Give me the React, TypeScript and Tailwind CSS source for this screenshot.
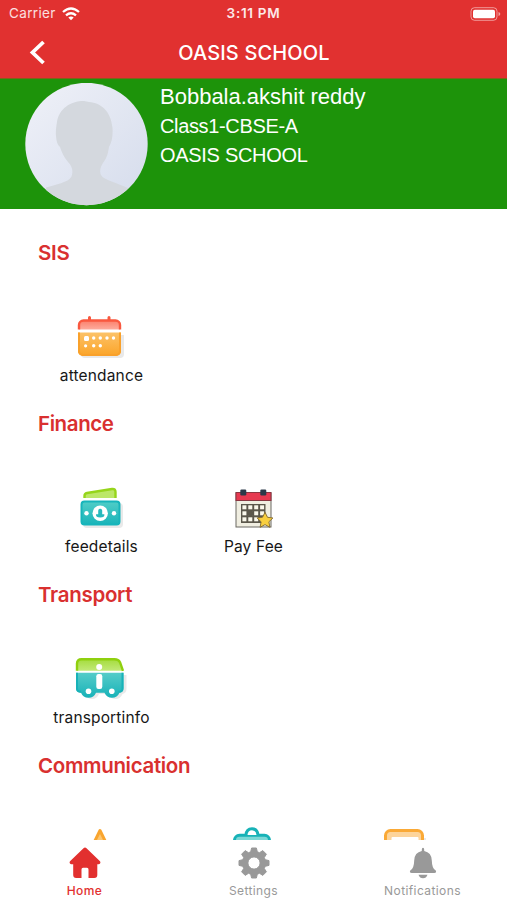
import React from "react";

const AttendanceIcon = () => (
  <svg width="52" height="48" viewBox="0 0 52 48">
    <defs>
      <linearGradient id="attTop" x1="0" y1="0" x2="0" y2="1">
        <stop offset="0" stopColor="#fb7f6b" />
        <stop offset="1" stopColor="#fdac9d" />
      </linearGradient>
      <linearGradient id="attBody" x1="0" y1="0" x2="0" y2="1">
        <stop offset="0" stopColor="#fcc268" />
        <stop offset="1" stopColor="#fba428" />
      </linearGradient>
    </defs>
    <path d="M6 22h43v19a4 4 0 0 1-4 4H10a4 4 0 0 1-4-4z" fill="#e9e9e9" />
    <path d="M14.5 4.500v5M34 4.500v5" stroke="#f9583f" strokeWidth="3" strokeLinecap="round" />
    <path d="M4 16.500v-4.500a4.500 4.500 0 0 1 4.500-4.500h32a4.500 4.500 0 0 1 4.500 4.500v4.500z" fill="url(#attTop)" />
    <path d="M4 16.500v-4.500a4.500 4.500 0 0 1 4.500-4.500h32a4.500 4.500 0 0 1 4.500 4.500v4.500" fill="none" stroke="#f9583f" strokeWidth="2.400" />
    <path d="M3 19.500h43v18.500a5 5 0 0 1-5 5H8a5 5 0 0 1-5-5z" fill="url(#attBody)" />
    <path d="M4 19.500V38a4 4 0 0 0 4 4h33a4 4 0 0 0 4-4V19.500" fill="none" stroke="#f9a12b" strokeWidth="2" />
    <g fill="#fff">
      <rect x="9" y="23" width="5" height="5" rx="1.500" />
      <circle cx="18.700" cy="25" r="1.700" />
      <circle cx="25.300" cy="25" r="1.700" />
      <circle cx="32" cy="25" r="1.700" />
      <circle cx="38.500" cy="25" r="1.700" />
      <circle cx="10.600" cy="32.800" r="1.600" />
      <circle cx="18.700" cy="32.800" r="1.700" />
      <circle cx="25.300" cy="32.800" r="1.700" />
    </g>
  </svg>
);

const FeeIcon = () => (
  <svg width="52" height="48" viewBox="0 0 52 48">
    <defs>
      <linearGradient id="feeBody" x1="0" y1="0" x2="0" y2="1">
        <stop offset="0" stopColor="#50cdc7" />
        <stop offset="1" stopColor="#19b4b9" />
      </linearGradient>
    </defs>
    <rect x="8" y="19" width="40" height="25" rx="4" fill="#e9e9e9" />
    <path d="M9.500 14v-2q0-2.500 2.500-3l25-4q3.500-.5 3.500 3v6z" fill="#bce768" />
    <path d="M9.500 14v-2q0-2.500 2.500-3l25-4q3.500-.5 3.500 3v6" fill="none" stroke="#96d51b" strokeWidth="2.400" />
    <rect x="6.500" y="17.500" width="38" height="23" rx="3" fill="url(#feeBody)" stroke="#17b5bb" strokeWidth="2" />
    <circle cx="25.200" cy="29.300" r="7.700" fill="#fff" />
    <circle cx="11.500" cy="29.300" r="2.200" fill="#fff" />
    <circle cx="39" cy="29.300" r="2.200" fill="#fff" />
    <path d="M25.200 26.800v3.500" stroke="#27b9bd" strokeWidth="4" strokeLinecap="round" />
    <path d="M21 30.200h8.400q.4 3.300-4.200 3.300t-4.200-3.300z" fill="#27b9bd" />
  </svg>
);

const PayFeeIcon = () => (
  <svg width="52" height="48" viewBox="0 0 52 48">
    <rect x="9" y="9" width="35" height="34" fill="#f0eee1" stroke="#6b6862" strokeWidth="1" />
    <rect x="9" y="8.500" width="35" height="8" fill="#e63950" stroke="#8b3540" strokeWidth="1" />
    <rect x="13.300" y="5.500" width="6" height="6" rx="1.200" fill="#2b3949" />
    <rect x="33.300" y="5.500" width="6" height="6" rx="1.200" fill="#2b3949" />
    <rect x="14" y="20" width="24.500" height="19" fill="#5b574b" />
    <g fill="#faf8ec">
      {[21.3, 27.3, 33.3].map((y) =>
        [15.4, 21.3, 27.2, 33.1].map((x) => <rect key={`${x}-${y}`} x={x} y={y} width="4" height="4" />)
      )}
    </g>
    <circle cx="23.300" cy="29.300" r="3" fill="#5b574b" />
    <path
      d="M38 28.300l2.500 5 5.400.7-4 3.800 1 5.500-4.900-2.700-4.900 2.700 1-5.500-4-3.800 5.400-.7z"
      fill="#f9cf3f"
      stroke="#80662b"
      strokeWidth=".9"
      strokeLinejoin="round"
    />
  </svg>
);

const TransportIcon = () => (
  <svg width="52" height="48" viewBox="0 0 52 48">
    <defs>
      <linearGradient id="busTop" x1="0" y1="0" x2="0" y2="1">
        <stop offset="0" stopColor="#a4dc3d" />
        <stop offset="1" stopColor="#c2e978" />
      </linearGradient>
      <linearGradient id="busBody" x1="0" y1="0" x2="0" y2="1">
        <stop offset="0" stopColor="#55ccc9" />
        <stop offset="1" stopColor="#18b2b8" />
      </linearGradient>
    </defs>
    <path d="M5 20h46.500v14q0 4-4 5-2 5-7 5t-7-5H24q-2 5-7 5t-7-5q-5-1-5-5z" fill="#e9e9e9" />
    <path d="M2 15.800v-7.300q0-4.300 4.500-4.300h33q4 0 5.500 3l3 8.600z" fill="url(#busTop)" />
    <path d="M2 15.800v-7.300q0-4.300 4.500-4.300h33q4 0 5.500 3l3 8.600" fill="none" stroke="#8fd00e" strokeWidth="2.400" />
    <path d="M1 17.800h47.500v15q0 4.500-4 5-2.200 5-7.500 5t-7.500-5H21q-2 5-7.500 5t-7.500-5q-5-.5-5-5z" fill="url(#busBody)" />
    <path d="M2 17.800v16q0 3 4 3M47.500 17.800v16q0 3-4 3" fill="none" stroke="#18b2b8" strokeWidth="2" />
    <circle cx="13.500" cy="36.300" r="2.800" fill="#fff" />
    <circle cx="36.800" cy="36.300" r="2.800" fill="#fff" />
    <circle cx="24.200" cy="12" r="3" fill="#fff" />
    <rect x="21.300" y="19" width="6" height="15" rx="2.200" fill="#fff" />
  </svg>
);

const WarningIcon = () => (
  <svg width="52" height="48" viewBox="0 0 52 48">
    <path d="M25 4.500L40 35H10z" fill="#fcc774" stroke="#f9a52f" strokeWidth="3" strokeLinejoin="round" />
  </svg>
);

const BagIcon = () => (
  <svg width="52" height="48" viewBox="0 0 52 48">
    <rect x="7.500" y="9.300" width="35" height="34" rx="5" fill="#7cd8d6" stroke="#17b2b7" strokeWidth="3" />
    <path d="M19 9q.5-6.300 6-6.300t6 6.300" fill="#fff" stroke="#17b2b7" strokeWidth="3" />
  </svg>
);

const NoticeIcon = () => (
  <svg width="52" height="48" viewBox="0 0 52 48">
    <path d="M44 12h3v30h-3z" fill="#e9e9e9" />
    <rect x="6.500" y="4.500" width="37" height="36" rx="5" fill="#fdd49a" stroke="#faa936" strokeWidth="3" />
    <rect x="12.500" y="11" width="27" height="28" rx="1" fill="#fff" />
  </svg>
);

const sections = [
  {
    title: "SIS",
    titleClass: "tracking-[-0.3px]",
    items: [{ label: "attendance", icon: <AttendanceIcon /> }],
  },
  {
    title: "Finance",
    titleClass: "tracking-[-0.4px]",
    items: [
      { label: "feedetails", icon: <FeeIcon /> },
      { label: "Pay Fee", icon: <PayFeeIcon /> },
    ],
  },
  {
    title: "Transport",
    titleClass: "tracking-[-0.3px]",
    items: [{ label: "transportinfo", icon: <TransportIcon /> }],
  },
  {
    title: "Communication",
    titleClass: "tracking-[-0.33px]",
    items: [
      { label: "", icon: <WarningIcon /> },
      { label: "", icon: <BagIcon /> },
      { label: "", icon: <NoticeIcon /> },
    ],
  },
];

const tabs = [
  {
    label: "Home",
    className: "text-[#e2302f] font-medium",
    icon: (
      <path d="M16 .5q.8 0 1.500.7L31 14.200q.8 1 .2 2-.5 1-1.700 1H28.300V28q0 3-3 3h-5.800v-8.500q0-1.700-1.500-1.700h-4q-1.500 0-1.500 1.700V31H7.200q-3 0-3-3V17.200H2.500q-1.200 0-1.700-1-.6-1 .2-2L14.500 1.200Q15.200.5 16 .5z" />
    ),
  },
  {
    label: "Settings",
    className: "text-[#999]",
    icon: (
      <path
        fillRule="evenodd"
        stroke="currentColor"
        strokeWidth="1"
        strokeLinejoin="round"
        d="M13.600 1h4.800l.9 3.800 2.200.9 3.300-2.100 3.600 3.600-2.100 3.300.9 2.200 3.800.9v4.800l-3.800.9-.9 2.200 2.100 3.300-3.600 3.600-3.300-2.100-2.200.9-.9 3.800h-4.800l-.9-3.800-2.200-.9-3.300 2.100-3.600-3.600 2.100-3.300-.9-2.200-3.800-.9v-4.800l3.800-.9.9-2.200-2.100-3.300 3.600-3.600 3.300 2.100 2.200-.9zM16 9.900a6.100 6.100 0 1 0 0 12.200 6.100 6.100 0 0 0 0-12.200z"
      />
    ),
  },
  {
    label: "Notifications",
    className: "text-[#999]",
    icon: (
      <>
        <path d="M16 .8q1.200 0 1.200 2v1.300q7.300 1.500 7.600 9.400.2 7.500 3.400 9.500 1.300 1 .8 2.300-.4.800-1.800.8H4.800q-1.400 0-1.800-.8-.5-1.300.8-2.300 3.200-2 3.400-9.500.3-7.900 7.600-9.400V2.800q0-2 1.200-2z" />
        <path d="M11.500 27.800h9q-1.200 3.500-4.500 3.500t-4.500-3.500z" />
      </>
    ),
  },
];

const StatusBar = () => (
  <div className="grid h-[27px] grid-cols-[160px_1fr_160px] items-center text-[13.500px]">
    <div className="flex items-center gap-[6px] pl-[9px] text-white/85">
      <span className="tracking-[0.35px]">Carrier</span>
      <svg width="18" height="14" viewBox="0 0 18 14" fill="none" stroke="#fff" strokeWidth="2.300">
        <path d="M1 5q8-7 16 0" />
        <path d="M4 8.300q5-4.200 10 0" />
        <path d="M6.300 10.500q2.700-2.200 5.400 0L9 13.300z" fill="#fff" stroke="none" />
      </svg>
    </div>
    <span className="text-center font-semibold tracking-[0.7px] text-white/90">3:11 PM</span>
    <svg className="mr-[6px] justify-self-end" width="31" height="14" viewBox="0 0 31 14">
      <rect x="1" y=".7" width="26" height="12.600" rx="3.500" fill="none" stroke="#fff" strokeOpacity=".5" />
      <rect x="3" y="2.700" width="22" height="8.600" rx="1.800" fill="#fff" />
      <path d="M28.500 5v4q1.800-.6 1.800-2t-1.800-2z" fill="#fff" fillOpacity=".55" />
    </svg>
  </div>
);

const Profile = () => (
  <section className="flex h-[131px] shrink-0 gap-[12px] border-t border-[#80611a] bg-[#1d930a] pl-[25px] pt-1 text-white">
    <svg className="shrink-0" width="123" height="123" viewBox="0 0 123 123">
      <defs>
        <linearGradient id="avatarBg" x1="0" y1="0" x2="1" y2="1">
          <stop offset="0" stopColor="#eff1f8" />
          <stop offset="1" stopColor="#d5dcec" />
        </linearGradient>
        <clipPath id="avatarClip">
          <circle cx="61.500" cy="61" r="61.200" />
        </clipPath>
      </defs>
      <g clipPath="url(#avatarClip)">
        <rect width="123" height="123" fill="url(#avatarBg)" />
        <path
          d="M59 18C45 18 34 26 32 39c-.8 5-1.500 9-1 14 .3 5 1.500 9 4 11 2 6 4 10 8 15 4 4 5 8 4 13-1 6-10 8-26 12.500v23h83v-22c-12-6-25-8-28-13.500-2-4 0-9 2-12 4-5 5-10 6-16 3-5 4-12 3.500-19C86 28 76 20 64 19z"
          fill="#d4d8de"
        />
      </g>
    </svg>
    <div className="font-['Liberation_Sans',Arial,sans-serif]">
      <p className="text-[22px] leading-[27px]">Bobbala.akshit reddy</p>
      <p className="mt-[2px] text-[20px] leading-[29px] tracking-[-0.35px]">Class1-CBSE-A</p>
      <p className="text-[20px] leading-[29px] tracking-[-0.3px]">OASIS SCHOOL</p>
    </div>
  </section>
);

export default function App() {
  return (
    <div className="flex h-[900px] w-[507px] flex-col overflow-hidden bg-white font-['Inter',sans-serif]">
      <header className="h-[78px] shrink-0 bg-[#e13130] text-white">
        <StatusBar />
        <div className="grid h-[51px] grid-cols-[80px_1fr_80px] items-center">
          <svg className="ml-[29px]" width="18" height="26" viewBox="0 0 18 26">
            <path d="M14.500 2L3.500 12.500l11 10.500" fill="none" stroke="#fff" strokeWidth="3.800" />
          </svg>
          <h1 className="pl-px text-center text-[20px] font-medium tracking-[0.15px]">OASIS SCHOOL</h1>
        </div>
      </header>
      <Profile />

      <main className="min-h-0 flex-1 overflow-hidden">
        {sections.map((section) => (
          <section key={section.title} className="h-[171px] pt-[30px]">
            <h2 className={`pl-[38px] text-[20.500px] leading-7 font-semibold text-[#d9302f] ${section.titleClass}`}>
              {section.title}
            </h2>
            <div className="grid grid-cols-[repeat(3,152px)] pl-[25px] pt-[46px]">
              {section.items.map((item, index) => (
                <div key={index} className="flex flex-col items-center">
                  {item.icon}
                  <span className="mt-[5px] pl-px text-[15.500px] leading-5 tracking-[0.15px] text-[#171717]">{item.label}</span>
                </div>
              ))}
            </div>
          </section>
        ))}
      </main>

      <nav className="grid h-[60px] shrink-0 grid-cols-3 bg-white">
        {tabs.map((tab) => (
          <div key={tab.label} className={`flex flex-col items-center pt-[7px] ${tab.className}`}>
            <svg width="32" height="32" viewBox="0 0 32 32" fill="currentColor">
              {tab.icon}
            </svg>
            <span className="mt-1 text-[12px] leading-4 tracking-[0.4px]">{tab.label}</span>
          </div>
        ))}
      </nav>
    </div>
  );
}
